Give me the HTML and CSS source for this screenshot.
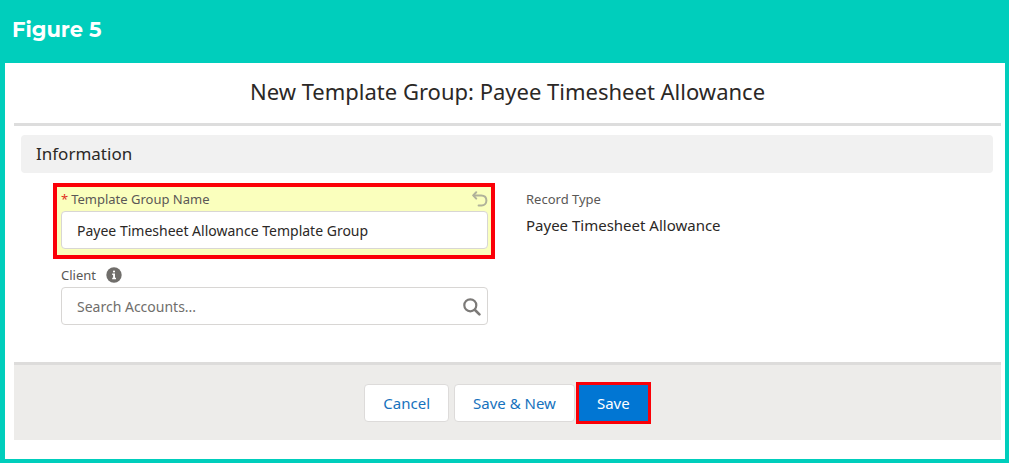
FILE: index.html
```html
<!DOCTYPE html>
<html lang="en">
<head>
    <meta charset="UTF-8">
    <meta name="viewport" content="width=device-width, initial-scale=1.0">
    <link rel="stylesheet" href="styles.css">
    <title>New Template Group</title>
</head>
<body>
    <div class="figure">
        <div class="figure-title">Figure 5</div>
        <form class="modal" onsubmit="return false">
            <h1>New Template Group: Payee Timesheet Allowance</h1>
            <h2>Information</h2>
            <div class="fields">
                <div class="column">
                    <div class="field edited">
                        <div class="label-row">
                            <label for="groupName"><span class="required">*</span>Template Group Name</label>
                            <button type="button" class="undo" aria-label="Undo">
                                <svg width="16" height="16" viewBox="0 0 16 16" fill="none" stroke="#b0b29a" stroke-width="2" stroke-linecap="round" stroke-linejoin="round">
                                    <path d="M4.2 1.2L1.2 4.4L4.2 7.6"/>
                                    <path d="M1.8 4.4H9.2C12.4 4.4 14.4 6.4 14.4 9.4C14.4 12.4 12.4 14.4 9.6 14.4H6.6"/>
                                </svg>
                            </button>
                        </div>
                        <input type="text" id="groupName" value="Payee Timesheet Allowance Template Group">
                    </div>
                    <div class="field">
                        <div class="label-row">
                            <label for="client">Client</label>
                            <svg class="info" width="16" height="16" viewBox="0 0 16 16">
                                <circle cx="8" cy="8" r="7.7" fill="#706e6b"/>
                                <path d="M8 3.4a1.1 1.1 0 1 1 0 2.2a1.1 1.1 0 0 1 0-2.2zM6.2 6.6H9v4.2h1v1.4H6.2v-1.4h.9V8h-.9z" fill="#fff"/>
                            </svg>
                        </div>
                        <div class="search">
                            <input type="text" id="client" placeholder="Search Accounts...">
                            <svg width="18" height="18" viewBox="0 0 18 18" fill="none" stroke="#7c7a78" stroke-linecap="round">
                                <circle cx="7.3" cy="7.3" r="6" stroke-width="2.2"/>
                                <path d="M12 12L16.4 16.4" stroke-width="2.6"/>
                            </svg>
                        </div>
                    </div>
                </div>
                <div class="column record">
                    <div class="record-label">Record Type</div>
                    <div class="record-value">Payee Timesheet Allowance</div>
                </div>
            </div>
            <div class="footer">
                <button type="button" class="btn">Cancel</button>
                <button type="button" class="btn">Save &amp; New</button>
                <button type="submit" class="btn save">Save</button>
            </div>
        </form>
    </div>
</body>
</html>
```
FILE: styles.css
```css
* {
    box-sizing: border-box;
}

body {
    margin: 0;
    font-family: "Segoe UI", "Noto Sans", "Open Sans", sans-serif;
    font-size: 15px;
    color: #2b2826;
    background-color: white;
}

.figure {
    border: 4px solid #00cebc;
    border-top: none;
    border-left-width: 5px;
}

.figure-title {
    height: 63px;
    padding: 16px 7px;
    background-color: #00cebc;
    color: white;
    font-family: "Montserrat", "Inter", sans-serif;
    font-size: 21px;
    font-weight: 700;
    line-height: 28px;
}

.modal {
    margin: 0 4px 19px 9px;
}

h1 {
    margin: 0;
    padding: 13px 0 17px;
    border-bottom: 3px solid #dddddd;
    font-size: 22px;
    font-weight: 400;
    line-height: 30px;
    text-align: center;
}

h2 {
    margin: 9px 8px 10px 7px;
    padding: 0 15px;
    border-radius: 4px;
    background-color: #f1f1f1;
    font-size: 17px;
    font-weight: 400;
    line-height: 38px;
}

.fields {
    display: grid;
    grid-template-columns: 1fr 1fr;
    gap: 31px;
    padding: 0 33px 37px 39px;
}

.field {
    padding: 4px 7px 0 8px;
}

.edited {
    padding: 0 3px 6px 4px;
    border: 4px solid #fb0007;
    background-color: #faffbd;
}

.label-row {
    display: flex;
    align-items: center;
    height: 24px;
    color: #5a5856;
    font-size: 13px;
}

.required {
    margin-right: 3px;
    color: #e0301e;
}

.undo {
    display: flex;
    margin-left: auto;
    padding: 0;
    border: none;
    background: none;
    cursor: pointer;
}

.info {
    margin-left: 10px;
}

input {
    display: block;
    width: 100%;
    height: 38px;
    padding: 0 15px;
    border: 1px solid #d8d6d4;
    border-radius: 4px;
    background-color: white;
    color: #2b2826;
    font: inherit;
    font-size: 14px;
}

input::placeholder {
    color: #706e6b;
    opacity: 1;
}

.search {
    position: relative;
}

.search svg {
    position: absolute;
    top: 11px;
    right: 7px;
}

.record {
    padding-top: 4px;
}

.record-label {
    color: #5a5856;
    font-size: 13px;
    line-height: 24px;
}

.record-value {
    line-height: 28px;
}

.footer {
    display: flex;
    justify-content: center;
    align-items: center;
    padding: 17px 0 16px;
    border-top: 3px solid #dddcdb;
    background-color: #edecea;
}

.btn {
    height: 38px;
    margin-right: 5px;
    padding: 0 18px;
    border: 1px solid #dddbda;
    border-radius: 4px;
    background-color: white;
    color: #1672bd;
    font: inherit;
    line-height: 34px;
    cursor: pointer;
}

.save {
    height: 42px;
    margin: 0 0 0 -4px;
    border: 3px solid #fb0007;
    border-radius: 0;
    background-color: #0176d3;
    color: white;
}
```
